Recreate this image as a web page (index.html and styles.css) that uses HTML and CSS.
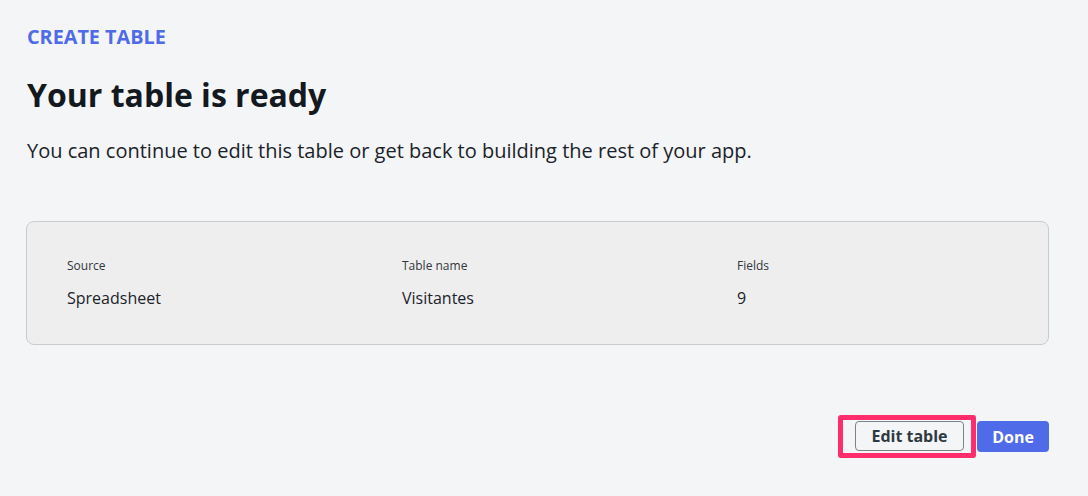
FILE: index.html
```html
<!DOCTYPE html>
<html>
<head>
<meta charset="utf-8">
<link rel="stylesheet" href="styles.css">
</head>
<body>
<div class="page">
  <div class="eyebrow">CREATE TABLE</div>
  <h1 class="title">Your table is ready</h1>
  <p class="lead">You can continue to edit this table or get back to building the rest of your app.</p>
  <div class="card">
    <div class="field">
      <div class="label">Source</div>
      <div class="value">Spreadsheet</div>
    </div>
    <div class="field">
      <div class="label">Table name</div>
      <div class="value">Visitantes</div>
    </div>
    <div class="field">
      <div class="label">Fields</div>
      <div class="value">9</div>
    </div>
  </div>
  <div class="actions">
    <div class="highlight">
      <button class="btn btn-secondary">Edit table</button>
    </div>
    <button class="btn btn-primary">Done</button>
  </div>
</div>
</body>
</html>
```
FILE: styles.css
```css
html, body {
  margin: 0;
  padding: 0;
  background: #f4f5f7;
}
body {
  font-family: "Open Sans", "Noto Sans", sans-serif;
  color: #1b232a;
}
.page {
  padding: 24px 39px 0 27px;
}
.eyebrow {
  font-size: 19.8px;
  font-weight: 700;
  color: #4f6be8;
  line-height: 26px;
}
.title {
  margin: 23px 0 0 0;
  font-size: 32px;
  font-weight: 700;
  line-height: 44px;
  color: #13191e;
}
.lead {
  margin: 20px 0 0 0;
  font-size: 20px;
  line-height: 28px;
  color: #1b232a;
}
.card {
  margin: 56px 0 0 -1px;
  background: #eeeeee;
  border: 1px solid #c9cccf;
  border-radius: 8px;
  padding: 35px 40px 35px 40px;
  display: grid;
  grid-template-columns: repeat(3, 1fr);
  column-gap: 64px;
}
.label {
  font-size: 12px;
  line-height: 18px;
  color: #2f363d;
}
.value {
  margin-top: 12px;
  font-size: 16px;
  line-height: 22px;
  color: #1b232a;
}
.actions {
  margin-top: 70px;
  display: flex;
  justify-content: flex-end;
  align-items: center;
  gap: 1px;
}
.highlight {
  border: 5px solid #ff2d6b;
  border-radius: 3px;
  padding: 1px 7px 2px 12px;
  display: flex;
}
.btn {
  font-family: "Open Sans", "Noto Sans", sans-serif;
  font-size: 16px;
  font-weight: 700;
  border-radius: 4px;
  cursor: pointer;
}
.btn-secondary {
  width: 109px;
  height: 30px;
  background: #f4f5f7;
  border: 1px solid #7b8288;
  color: #2f3a40;
  padding: 0;
}
.btn-primary {
  width: 72px;
  height: 31px;
  background: #4f6be8;
  border: none;
  color: #ffffff;
  padding: 0;
}
```
